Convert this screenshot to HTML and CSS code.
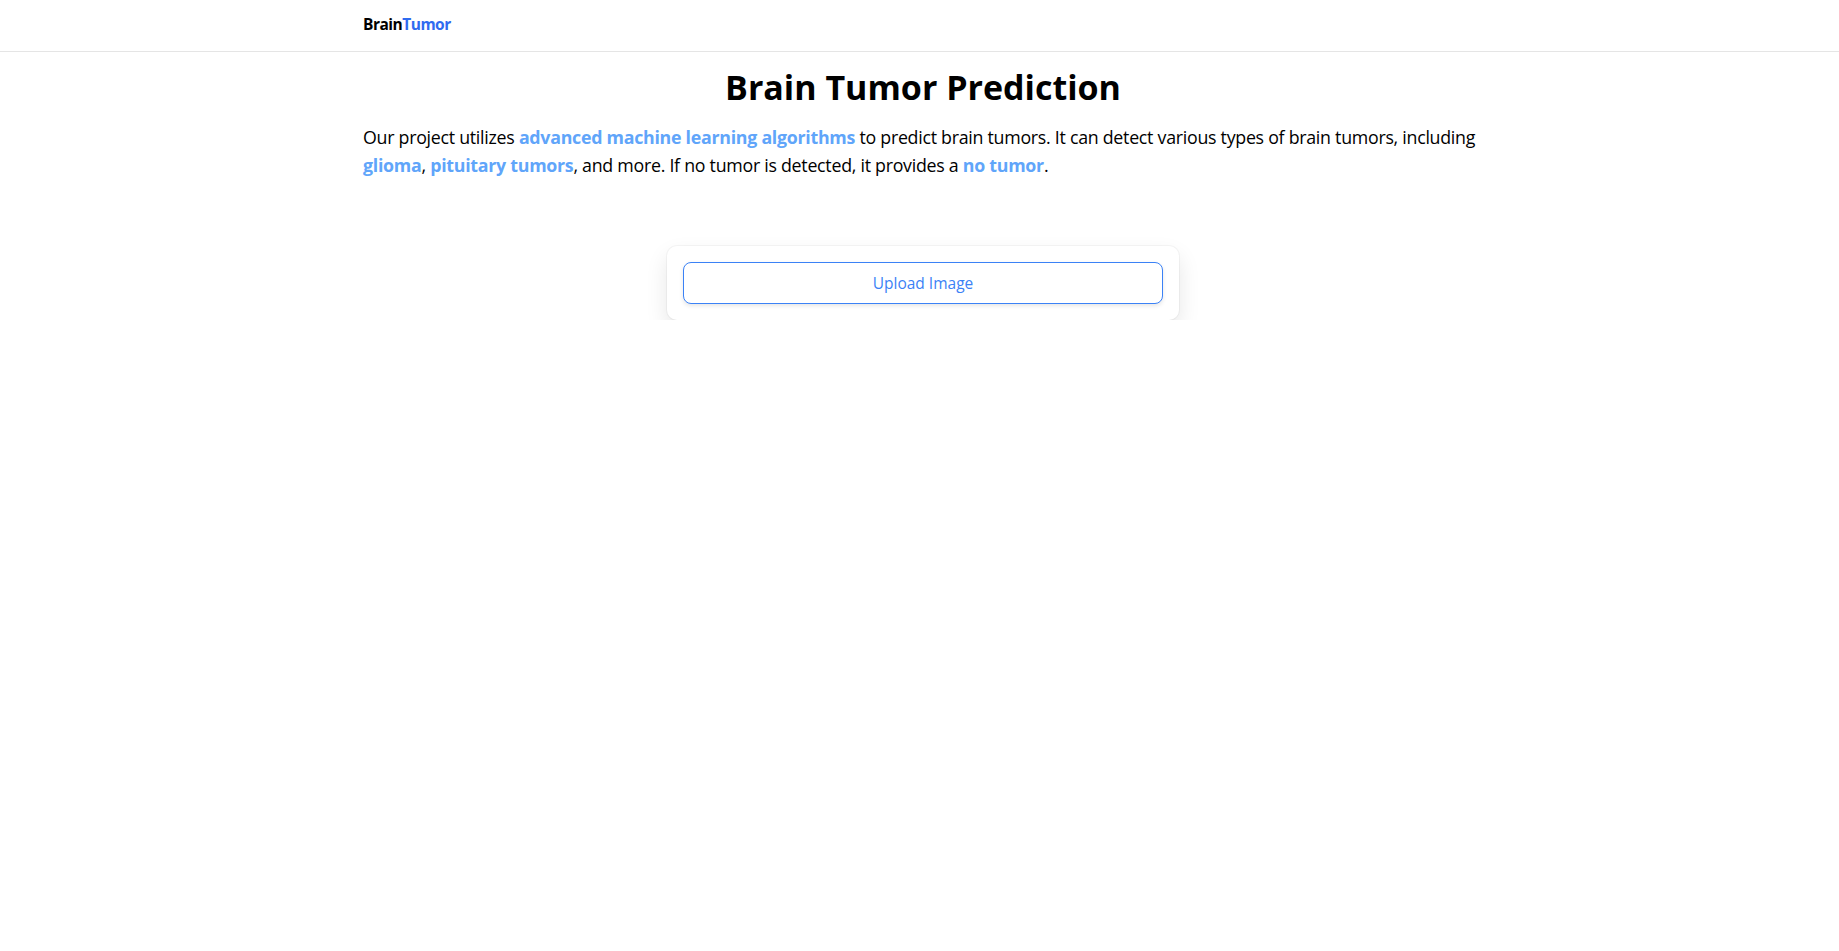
FILE: index.html
```html
<!DOCTYPE html>
<html lang="en">
<head>
<meta charset="utf-8">
<title>Brain Tumor Prediction</title>
<link rel="stylesheet" href="styles.css">
</head>
<body>
<header class="topbar">
  <div class="container topbar-inner">
    <a class="logo" href="#"><span class="logo-dark">Brain</span><span class="logo-blue">Tumor</span></a>
  </div>
</header>
<main class="container">
  <h1 class="title">Brain Tumor Prediction</h1>
  <p class="intro">Our project utilizes <strong class="hl">advanced machine learning algorithms</strong> to predict brain tumors. It can detect various types of brain tumors, including <strong class="hl">glioma</strong>, <strong class="hl">pituitary tumors</strong>, and more. If no tumor is detected, it provides a <strong class="hl">no tumor</strong>.</p>
  <section class="upload-card">
    <button class="upload-btn" type="button">Upload Image</button>
  </section>
</main>
</body>
</html>
```

FILE: styles.css
```css
* { box-sizing: border-box; }
html, body { margin: 0; padding: 0; background: #fff; }
body {
  font-family: "Open Sans", "Noto Sans", sans-serif;
  color: #000;
  padding-left: 7px;
}
.container {
  width: 1120px;
  margin: 0 auto;
}
.topbar {
  height: 52px;
  border-bottom: 1px solid #e5e5e5;
  margin-left: -7px;
  padding-left: 7px;
}
.topbar-inner {
  height: 47px;
  display: flex;
  align-items: center;
}
.logo {
  font-size: 15.5px;
  font-weight: 700;
  text-decoration: none;
  letter-spacing: -0.5px;
}
.logo-dark { color: #000; }
.logo-blue { color: #2f6bf0; }
.title {
  font-size: 34px;
  font-weight: 700;
  text-align: center;
  margin: 14px 0 0;
  line-height: 1.25;
}
.intro {
  font-size: 17.8px;
  letter-spacing: -0.27px;
  line-height: 28px;
  margin: 14px 0 0;
}
.hl { color: #60a5fa; font-weight: 700; }
.upload-card {
  width: 512px;
  margin: 67px auto 0;
  padding: 16px;
  background: #fff;
  border-radius: 10px;
  box-shadow: 0 0 0 1px rgba(0,0,0,0.035), 0 10px 22px rgba(0,0,0,0.1);
}
.upload-btn {
  display: block;
  width: 100%;
  height: 42px;
  border: 1px solid #3b82f6;
  border-radius: 8px;
  background: #fff;
  color: #3b82f6;
  font-family: inherit;
  font-size: 15.5px;
  box-shadow: 0 2px 4px rgba(0,0,0,0.1);
  cursor: pointer;
}
```
